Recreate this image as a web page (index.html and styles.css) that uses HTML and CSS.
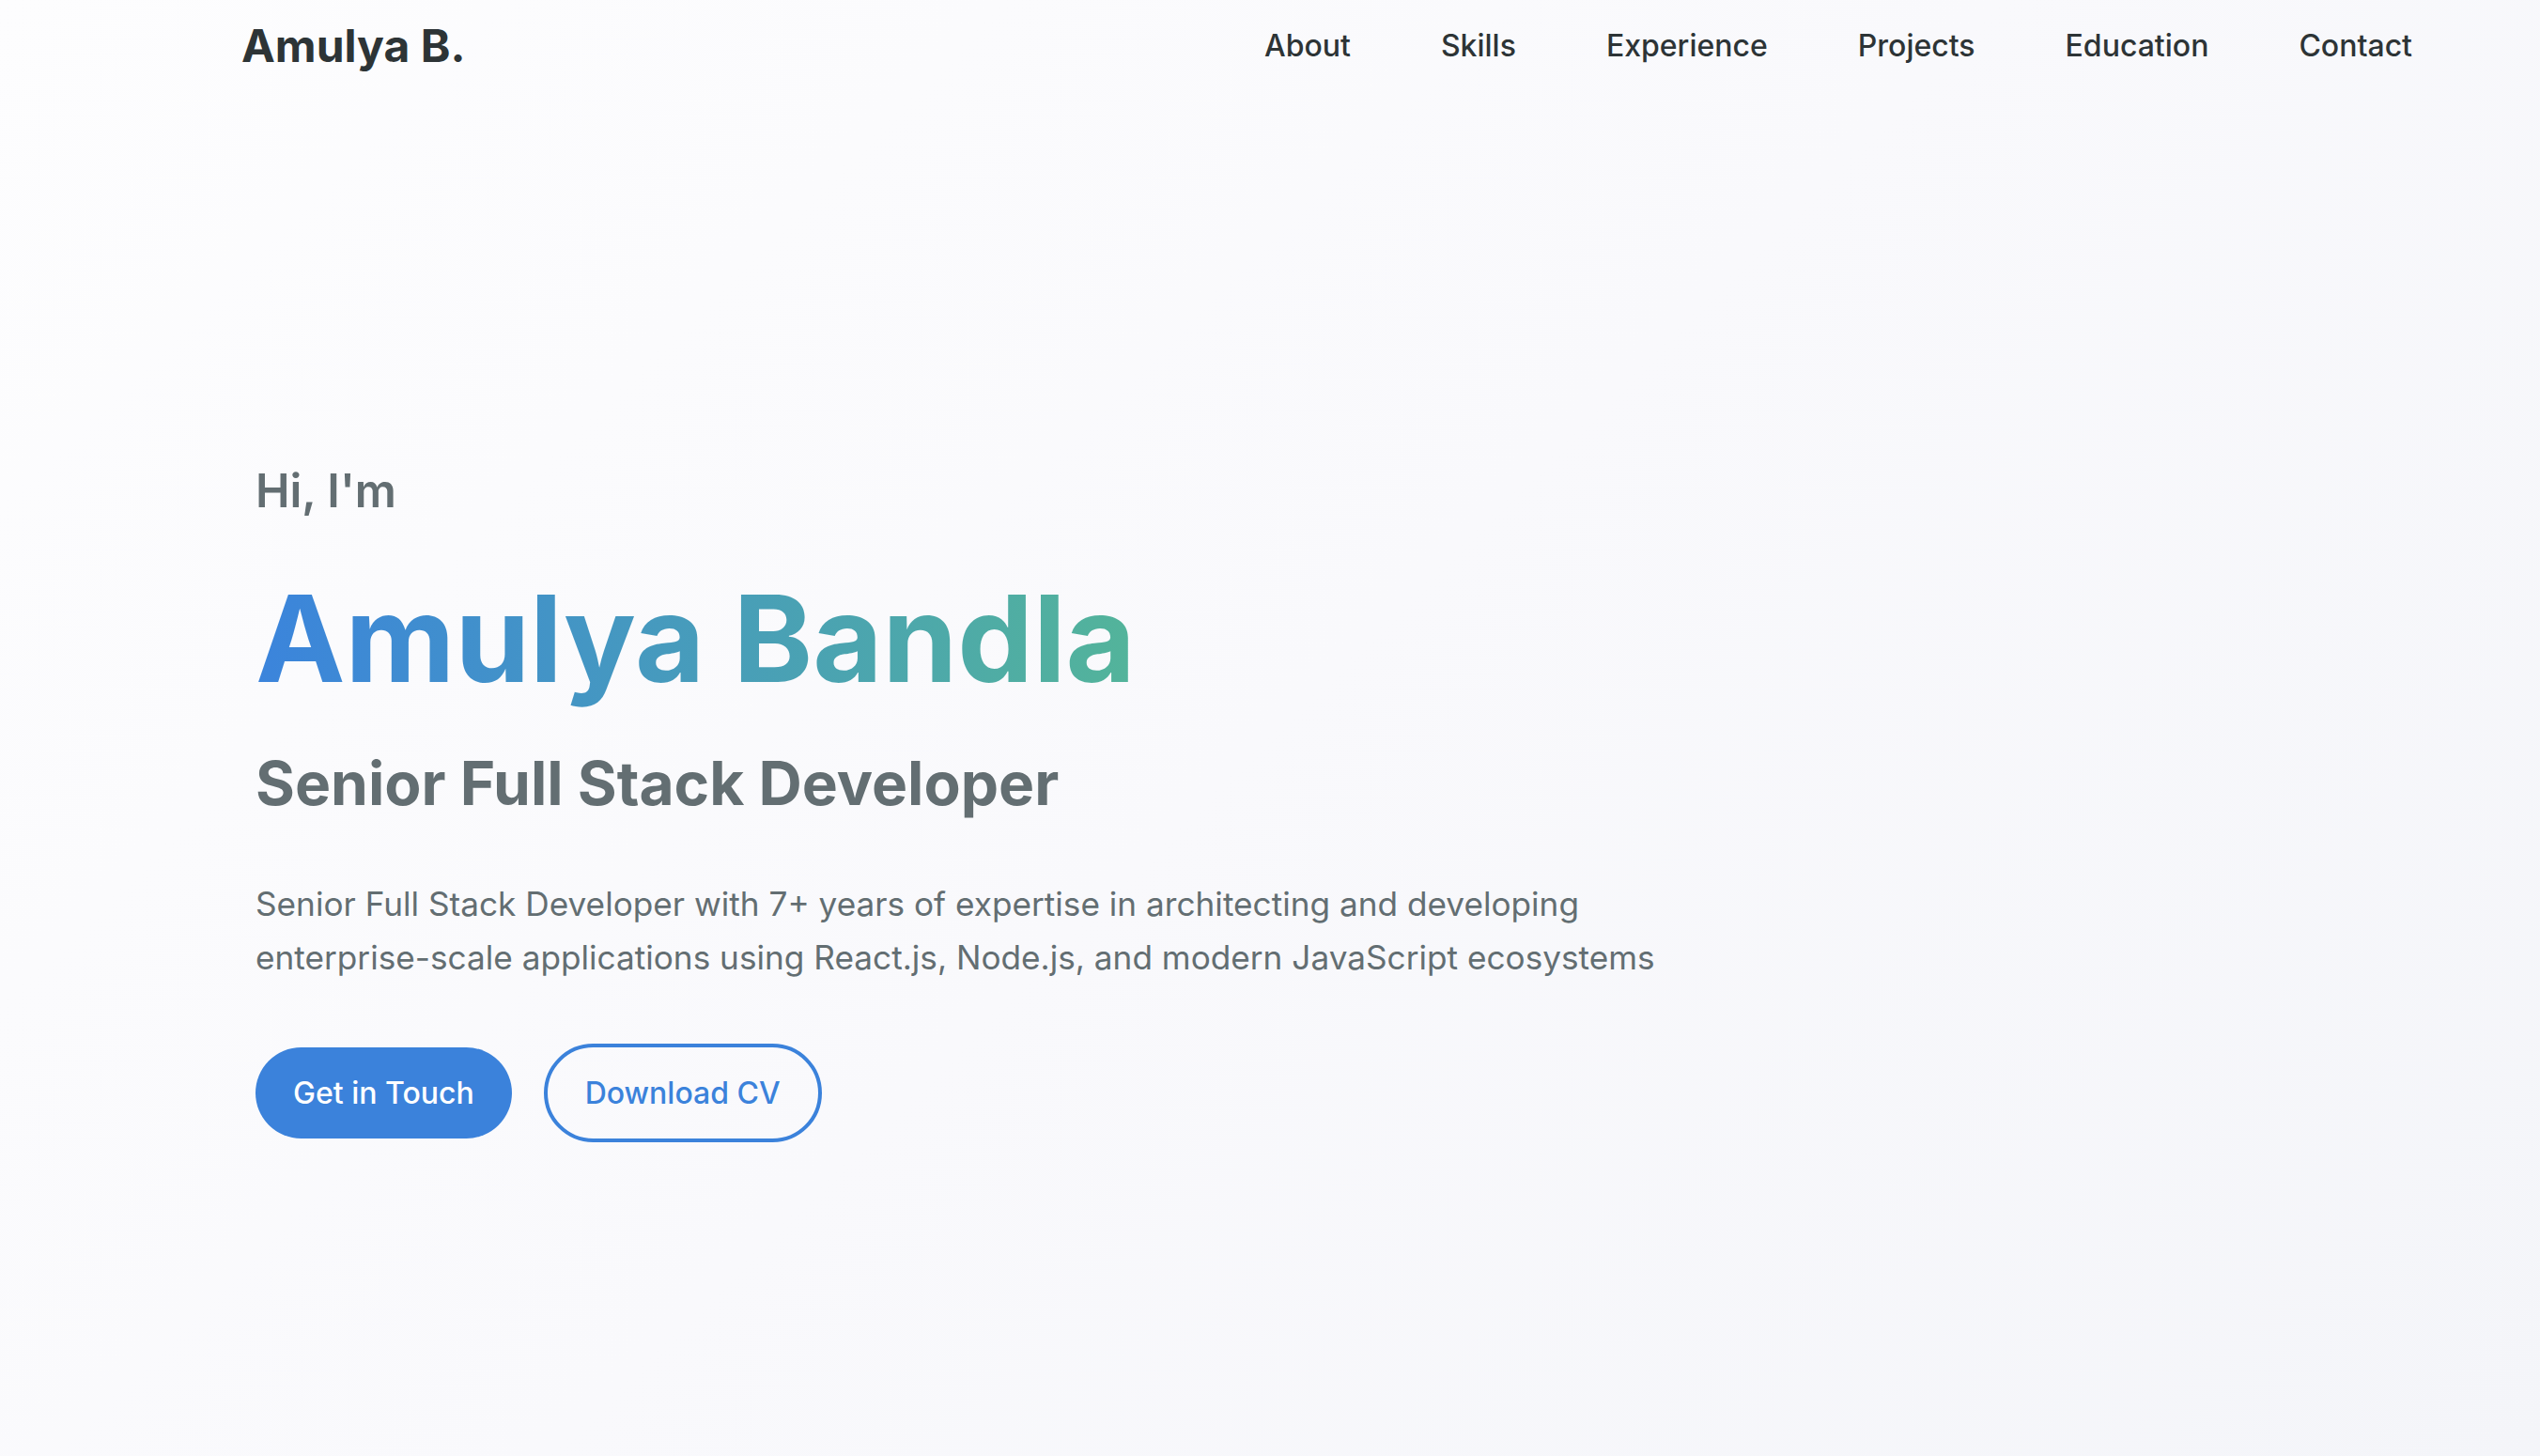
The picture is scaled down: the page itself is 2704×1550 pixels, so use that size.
FILE: index.html
```html
<!DOCTYPE html>
<html lang="en">
<head>
<meta charset="utf-8">
<title>Amulya B.</title>
<link rel="stylesheet" href="styles.css">
</head>
<body>
<header class="header">
  <a class="logo" href="#">Amulya B.</a>
  <nav class="nav">
    <a href="#about">About</a>
    <a href="#skills">Skills</a>
    <a href="#experience">Experience</a>
    <a href="#projects">Projects</a>
    <a href="#education">Education</a>
    <a href="#contact">Contact</a>
  </nav>
</header>
<main class="hero">
  <p class="greeting">Hi, I'm</p>
  <h1 class="name">Amulya Bandla</h1>
  <h2 class="role">Senior Full Stack Developer</h2>
  <p class="intro">Senior Full Stack Developer with 7+ years of expertise in architecting and developing enterprise-scale applications using React.js, Node.js, and modern JavaScript ecosystems</p>
  <div class="actions">
    <a class="btn btn-primary" href="#contact">Get in Touch</a>
    <a class="btn btn-outline" href="#">Download CV</a>
  </div>
</main>
</body>
</html>
```

FILE: styles.css
```css
* { box-sizing: border-box; }
html, body { margin: 0; padding: 0; }
body {
  font-family: Inter, "Noto Sans", sans-serif;
  background: linear-gradient(135deg, #fdfdfe 0%, #f9f9fc 50%, #f4f5f9 100%);
  min-height: 1550px;
  color: #2d3436;
}
a { text-decoration: none; color: inherit; }
.header {
  display: flex;
  justify-content: space-between;
  align-items: center;
  height: 96px;
  padding: 0 136px 0 257px;
}
.logo {
  font-size: 48px;
  font-weight: 700;
  color: #2d3436;
}
.nav {
  display: flex;
  gap: 96px;
}
.nav a {
  font-size: 32px;
  font-weight: 500;
  color: #2d3436;
}
.hero {
  padding: 398px 0 0 272px;
}
.greeting {
  margin: 0;
  font-size: 49px;
  line-height: 1.2;
  font-weight: 600;
  color: #636e72;
}
.name {
  margin: 50px 0 0;
  display: inline-block;
  font-size: 128px;
  line-height: 1.2;
  font-weight: 700;
  background: linear-gradient(90deg, #3b84dc 0%, #53b49a 100%);
  -webkit-background-clip: text;
  background-clip: text;
  color: transparent;
}
.role {
  margin: 40px 0 0;
  font-size: 64px;
  line-height: 1.2;
  font-weight: 700;
  color: #636e72;
}
.intro {
  margin: 61px 0 0;
  max-width: 1600px;
  font-size: 35.2px;
  line-height: 57px;
  color: #636e72;
}
.actions {
  margin-top: 63px;
  display: flex;
  align-items: center;
  gap: 34px;
}
.btn {
  display: inline-block;
  font-size: 32px;
  font-weight: 500;
  line-height: 39px;
  border-radius: 60px;
  padding: 29px 40px;
}
.btn-primary {
  background: #3b82db;
  color: #ffffff;
}
.btn-outline {
  border: 4px solid #3b82db;
  color: #3b82db;
  padding: 29px 40px;
}
```
